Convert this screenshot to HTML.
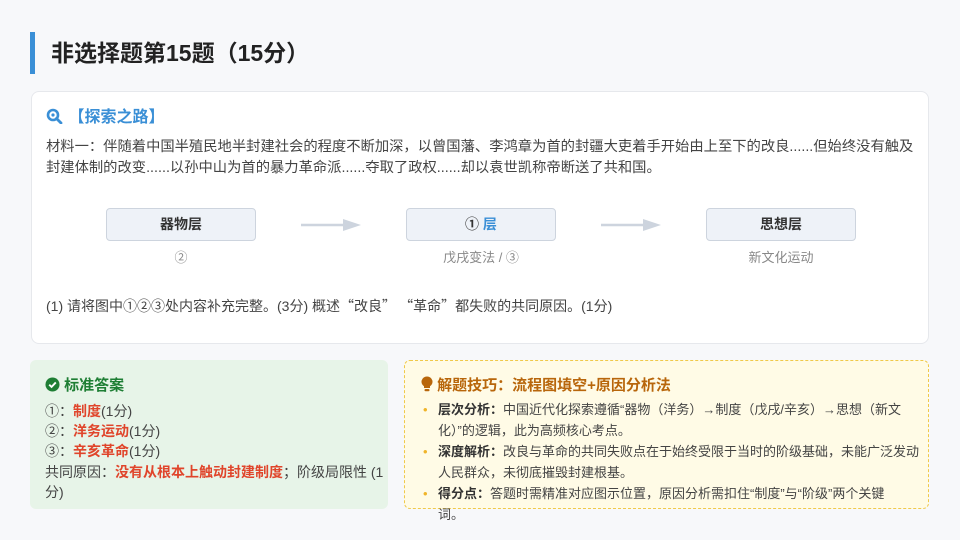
<!DOCTYPE html>
<html><head><meta charset="utf-8"><style>
*{margin:0;padding:0;box-sizing:border-box}
body{width:960px;height:540px;background:#f7f8fa;font-family:"Liberation Sans","Noto Sans CJK SC",sans-serif;color:#444;position:relative;overflow:hidden}
.c{font-family:"Noto Sans CJK SC",sans-serif}
.title{position:absolute;left:30px;top:32px;height:42px;border-left:5px solid #3a8fd6;padding-left:16px;font-size:23px;font-weight:bold;color:#222;line-height:42px}
.card{position:absolute;left:31px;top:91px;width:898px;height:253px;background:#fff;border:1px solid #e6e8ec;border-radius:8px}
.h{position:absolute;left:14px;top:14px;font-size:16px;font-weight:bold;color:#3a8fd6;line-height:24px}
.mat{position:absolute;left:14px;top:45px;font-size:14.3px;line-height:21px;color:#444;white-space:nowrap}
.box{position:absolute;top:116px;width:150px;height:33px;background:#eef2f8;border:1px solid #cdd4de;border-radius:4px;text-align:center;line-height:31px;font-size:14px;font-weight:bold;color:#333}
.lab{position:absolute;top:156px;width:150px;text-align:center;font-size:13px;color:#888;line-height:20px}
.arr{position:absolute;top:127px;width:60px;height:12px}
.q{position:absolute;left:14px;top:203px;font-size:14px;line-height:22px;color:#444}
.g{position:absolute;left:30px;top:360px;width:358px;height:149px;background:#e7f4e8;border-radius:6px;padding:14px 0 12px 15px;font-size:14px;line-height:20.2px;color:#444;white-space:nowrap}
.g .t{color:#1e7e34;font-weight:bold;font-size:15px;line-height:24px;margin-bottom:3px}
.r{color:#e0452b;font-weight:bold}
.y{position:absolute;left:404px;top:360px;width:525px;height:149px;background:#fffbe6;border:1.5px dashed #f0c94a;border-radius:6px;padding:13px 0 0 16px;font-size:13px;line-height:21px;color:#444;overflow:visible;white-space:nowrap}
.y .t{color:#b8660b;font-weight:bold;font-size:15px;line-height:24px;margin-bottom:1px}
.y ul{list-style:none}
.y li{position:relative;padding-left:17px}
.y li:before{content:"•";position:absolute;left:2px;color:#f0b429}
.y b{color:#333}
</style></head><body>
<div class="title">非选择题第15题（15分）</div>
<div class="card">
<div class="h"><svg width="18" height="16" viewBox="0 0 18 16" style="vertical-align:-2px"><circle cx="7" cy="7" r="5" fill="none" stroke="#3a8fd6" stroke-width="2.6"/><circle cx="7" cy="7" r="1.6" fill="#3a8fd6"/><path d="M10.5 10.5L15 15" stroke="#3a8fd6" stroke-width="2.8" stroke-linecap="round"/></svg> 【探索之路】</div>
<div class="mat">材料一：伴随着中国半殖民地半封建社会的程度不断加深，以曾国藩、李鸿章为首的封疆大吏着手开始由上至下的改良......但始终没有触及<br>封建体制的改变......以孙中山为首的暴力革命派......夺取了政权......却以袁世凯称帝断送了共和国。</div>
<div class="box" style="left:74px">器物层</div><div class="lab" style="left:74px">②</div>
<svg class="arr" style="left:269px" viewBox="0 0 60 12"><path d="M0 6H44" stroke="#cdd4de" stroke-width="2.5"/><path d="M42 0L60 6L42 12Z" fill="#cdd4de"/></svg>
<div class="box" style="left:374px">①<span style="color:#3a8fd6"> 层</span></div><div class="lab" style="left:374px">戊戌变法 / ③</div>
<svg class="arr" style="left:569px" viewBox="0 0 60 12"><path d="M0 6H44" stroke="#cdd4de" stroke-width="2.5"/><path d="M42 0L60 6L42 12Z" fill="#cdd4de"/></svg>
<div class="box" style="left:674px">思想层</div><div class="lab" style="left:674px">新文化运动</div>
<div class="q">(1) 请将图中①②③处内容补充完整。(3分) 概述<span class="c">“</span>改良<span class="c">” “</span>革命<span class="c">”</span>都失败的共同原因。(1分)</div>
</div>
<div class="g"><div class="t"><svg width="15" height="15" viewBox="0 0 16 16" style="vertical-align:-2px"><circle cx="8" cy="8" r="7.5" fill="#1e7e34"/><path d="M4.5 8.2L7 10.6L11.5 5.8" fill="none" stroke="#fff" stroke-width="2"/></svg> 标准答案</div>
①：<span class="r">制度</span>(1分)<br>②：<span class="r">洋务运动</span>(1分)<br>③：<span class="r">辛亥革命</span>(1分)<br>共同原因：<span class="r">没有从根本上触动封建制度</span>；阶级局限性 (1<br>分)</div>
<div class="y"><div class="t"><svg width="12" height="16" viewBox="0 0 12 16" style="vertical-align:-2px"><path d="M6 0.5A5.3 5.3 0 0 0 3 10.3V12H9V10.3A5.3 5.3 0 0 0 6 0.5Z" fill="#b8660b"/><rect x="3.5" y="13" width="5" height="2.3" rx="1" fill="#b8660b"/></svg> 解题技巧：流程图填空+原因分析法</div>
<ul><li><b>层次分析：</b>中国近代化探索遵循“器物（洋务）→制度（戊戌/辛亥）→思想（新文<br>化）”的逻辑，此为高频核心考点。</li>
<li><b>深度解析：</b>改良与革命的共同失败点在于始终受限于当时的阶级基础，未能广泛发动<br>人民群众，未彻底摧毁封建根基。</li>
<li><b>得分点：</b>答题时需精准对应图示位置，原因分析需扣住“制度”与“阶级”两个关键<br>词。</li></ul></div>
</body></html>
